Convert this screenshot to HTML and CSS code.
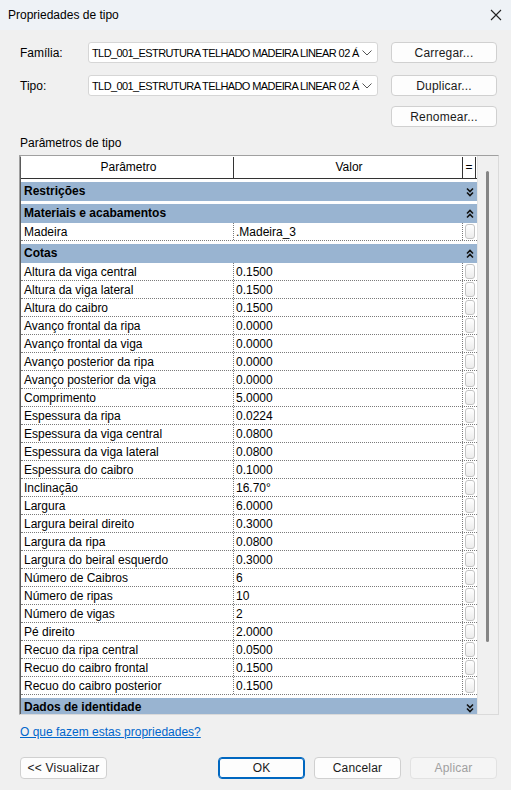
FILE: index.html
```html
<!DOCTYPE html>
<html lang="pt">
<head>
<meta charset="utf-8">
<title>Propriedades de tipo</title>
<link rel="stylesheet" href="styles.css">
</head>
<body>
<div class="window">
  <div class="titlebar">
    <span class="title">Propriedades de tipo</span>
    <svg class="close" width="12" height="12" viewBox="0 0 12 12"><path d="M1 1 L11 11 M11 1 L1 11" stroke="#222" stroke-width="1.1" fill="none"/></svg>
  </div>
  <div class="content">
    <div class="topform">
      <label class="lbl">Família:</label>
      <div class="combo"><span class="combo-text">TLD_001_ESTRUTURA TELHADO MADEIRA LINEAR 02 Á</span><svg class="chev" width="10" height="6" viewBox="0 0 10 6"><path d="M0.5 0.5 L5 5 L9.5 0.5" stroke="#555" stroke-width="1" fill="none"/></svg></div>
      <button class="btn">Carregar...</button>
      <label class="lbl">Tipo:</label>
      <div class="combo"><span class="combo-text">TLD_001_ESTRUTURA TELHADO MADEIRA LINEAR 02 Á</span><svg class="chev" width="10" height="6" viewBox="0 0 10 6"><path d="M0.5 0.5 L5 5 L9.5 0.5" stroke="#555" stroke-width="1" fill="none"/></svg></div>
      <button class="btn">Duplicar...</button>
      <span></span><span></span>
      <button class="btn btn-last">Renomear...</button>
    </div>
    <div class="section-label">Parâmetros de tipo</div>
    <div class="frame">
      <div class="table">
        <div class="hdr">
          <div class="c1 hc">Parâmetro</div>
          <div class="c2 hc">Valor</div>
          <div class="c3 hc heq">=</div>
        </div>
        <div class="grp"><div class="gname">Restrições</div><div class="gicon"><svg width="8" height="10" viewBox="0 0 8 10"><path d="M1 1.5 L4 4.5 L7 1.5 M1 5.5 L4 8.5 L7 5.5" stroke="#111" stroke-width="1.6" fill="none"/></svg></div></div>
        <div class="grp"><div class="gname">Materiais e acabamentos</div><div class="gicon"><svg width="8" height="10" viewBox="0 0 8 10"><path d="M1 4.5 L4 1.5 L7 4.5 M1 8.5 L4 5.5 L7 8.5" stroke="#111" stroke-width="1.6" fill="none"/></svg></div></div>
        <div class="row"><div class="c1">Madeira</div><div class="c2">.Madeira_3</div><div class="c3"><span class="eqbox"></span></div></div>
        <div class="grp"><div class="gname">Cotas</div><div class="gicon"><svg width="8" height="10" viewBox="0 0 8 10"><path d="M1 4.5 L4 1.5 L7 4.5 M1 8.5 L4 5.5 L7 8.5" stroke="#111" stroke-width="1.6" fill="none"/></svg></div></div>
        <div class="row"><div class="c1">Altura da viga central</div><div class="c2">0.1500</div><div class="c3"><span class="eqbox"></span></div></div>
        <div class="row"><div class="c1">Altura da viga lateral</div><div class="c2">0.1500</div><div class="c3"><span class="eqbox"></span></div></div>
        <div class="row"><div class="c1">Altura do caibro</div><div class="c2">0.1500</div><div class="c3"><span class="eqbox"></span></div></div>
        <div class="row"><div class="c1">Avanço frontal da ripa</div><div class="c2">0.0000</div><div class="c3"><span class="eqbox"></span></div></div>
        <div class="row"><div class="c1">Avanço frontal da viga</div><div class="c2">0.0000</div><div class="c3"><span class="eqbox"></span></div></div>
        <div class="row"><div class="c1">Avanço posterior da ripa</div><div class="c2">0.0000</div><div class="c3"><span class="eqbox"></span></div></div>
        <div class="row"><div class="c1">Avanço posterior da viga</div><div class="c2">0.0000</div><div class="c3"><span class="eqbox"></span></div></div>
        <div class="row"><div class="c1">Comprimento</div><div class="c2">5.0000</div><div class="c3"><span class="eqbox"></span></div></div>
        <div class="row"><div class="c1">Espessura da ripa</div><div class="c2">0.0224</div><div class="c3"><span class="eqbox"></span></div></div>
        <div class="row"><div class="c1">Espessura da viga central</div><div class="c2">0.0800</div><div class="c3"><span class="eqbox"></span></div></div>
        <div class="row"><div class="c1">Espessura da viga lateral</div><div class="c2">0.0800</div><div class="c3"><span class="eqbox"></span></div></div>
        <div class="row"><div class="c1">Espessura do caibro</div><div class="c2">0.1000</div><div class="c3"><span class="eqbox"></span></div></div>
        <div class="row"><div class="c1">Inclinação</div><div class="c2">16.70°</div><div class="c3"><span class="eqbox"></span></div></div>
        <div class="row"><div class="c1">Largura</div><div class="c2">6.0000</div><div class="c3"><span class="eqbox"></span></div></div>
        <div class="row"><div class="c1">Largura beiral direito</div><div class="c2">0.3000</div><div class="c3"><span class="eqbox"></span></div></div>
        <div class="row"><div class="c1">Largura da ripa</div><div class="c2">0.0800</div><div class="c3"><span class="eqbox"></span></div></div>
        <div class="row"><div class="c1">Largura do beiral esquerdo</div><div class="c2">0.3000</div><div class="c3"><span class="eqbox"></span></div></div>
        <div class="row"><div class="c1">Número de Caibros</div><div class="c2">6</div><div class="c3"><span class="eqbox"></span></div></div>
        <div class="row"><div class="c1">Número de ripas</div><div class="c2">10</div><div class="c3"><span class="eqbox"></span></div></div>
        <div class="row"><div class="c1">Número de vigas</div><div class="c2">2</div><div class="c3"><span class="eqbox"></span></div></div>
        <div class="row"><div class="c1">Pé direito</div><div class="c2">2.0000</div><div class="c3"><span class="eqbox"></span></div></div>
        <div class="row"><div class="c1">Recuo da ripa central</div><div class="c2">0.0500</div><div class="c3"><span class="eqbox"></span></div></div>
        <div class="row"><div class="c1">Recuo do caibro frontal</div><div class="c2">0.1500</div><div class="c3"><span class="eqbox"></span></div></div>
        <div class="row"><div class="c1">Recuo do caibro posterior</div><div class="c2">0.1500</div><div class="c3"><span class="eqbox"></span></div></div>
        <div class="grp"><div class="gname">Dados de identidade</div><div class="gicon"><svg width="8" height="10" viewBox="0 0 8 10"><path d="M1 1.5 L4 4.5 L7 1.5 M1 5.5 L4 8.5 L7 5.5" stroke="#111" stroke-width="1.6" fill="none"/></svg></div></div>
      </div>
      <div class="scroll"><div class="thumb"></div></div>
    </div>
    <a class="help" href="#">O que fazem estas propriedades?</a>
    <div class="bottom">
      <button class="btn bbtn">&lt;&lt; Visualizar</button>
      <div class="right-btns">
        <button class="btn bbtn ok">OK</button>
        <button class="btn bbtn">Cancelar</button>
        <button class="btn bbtn disabled">Aplicar</button>
      </div>
    </div>
  </div>
</div>
</body>
</html>
```
FILE: styles.css
```css
* { box-sizing: border-box; }
html, body { margin: 0; padding: 0; }
body {
  width: 511px;
  height: 790px;
  background: #f0f0f0;
  font-family: "Liberation Sans", Arial, sans-serif;
  font-size: 12px;
  color: #000;
  overflow: hidden;
}
.window { width: 511px; height: 790px; display: flex; flex-direction: column; }
.titlebar {
  height: 30px;
  flex: none;
  background: #eef2f6;
  display: flex;
  align-items: center;
  justify-content: space-between;
  padding: 0 9px 0 8px;
}
.title { font-size: 12px; color: #000; }
.close { display: block; }
.content { padding: 12px 14px 0 20px; display: flex; flex-direction: column; }

.topform {
  display: grid;
  grid-template-columns: 55px 290px 106px;
  grid-template-rows: 21px 21px 21px;
  column-gap: 13px;
  row-gap: 12px;
  align-items: center;
}
.lbl { font-size: 12px; }
.combo {
  height: 21px;
  background: #fff;
  border: 1px solid #d6d6d6;
  border-radius: 3px;
  display: flex;
  align-items: center;
  padding: 0 6px 0 3px;
  gap: 3px;
}
.combo-text {
  flex: 1;
  white-space: nowrap;
  font-size: 11px;
  letter-spacing: -0.6px;
  height: 14px;
  line-height: 14px;
}
.chev { flex: none; }
.btn {
  height: 21px;
  background: #fdfdfd;
  border: 1px solid #d0d0d0;
  border-radius: 4px;
  font-family: "Liberation Sans", Arial, sans-serif;
  font-size: 12px;
  color: #1a1a1a;
  padding: 0;
  letter-spacing: 0.2px;
}
.btn-last { margin-top: -4px; }

.section-label { margin-top: 7px; height: 15px; line-height: 15px; }

.frame {
  margin-top: 4px;
  width: 480px;
  margin-left: -1px;
  height: 560px;
  display: flex;
  border-top: 1px solid #a0a0a0;
  border-left: 1px solid #a0a0a0;
  border-right: 1px solid #dadada;
  border-bottom: 1px solid #dadada;
  background: #f0f0f0;
}
.table {
  width: 457px;
  background: #fff;
  border-left: 1px solid #5a5a5a;
  border-top: 1px solid #fff;
  overflow: hidden;
}
.hdr {
  display: flex;
  height: 22px;
  border-bottom: 1px solid #333;
  background: #fff;
}
.hc { text-align: center; line-height: 21px; }
.hdr .c1 { border-right: 1px solid #333; }
.hdr .heq { border-left: 1px solid #333; border-right: 1px solid #333; }
.c1 { width: 213px; flex: none; padding-left: 3px; white-space: nowrap; overflow: hidden; }
.c2 { width: 228px; flex: none; padding-left: 2px; white-space: nowrap; }
.c3 { width: 14px; flex: none; display: flex; align-items: center; justify-content: center; }
.row {
  display: flex;
  height: 18px;
  line-height: 18px;
  border-bottom: 1px dotted #7a7a7a;
}
.row .c1 { border-right: 1px dotted #7a7a7a; }
.row .c3 { border-left: 1px dotted #7a7a7a; }
.eqbox {
  width: 10px;
  height: 15px;
  border: 1px solid #c4c4c4;
  border-radius: 3px;
  background: linear-gradient(#ffffff, #ececec);
}
.grp {
  display: flex;
  height: 22px;
  border-top: 3px solid #fff;
  background: #99b4d1;
  font-weight: bold;
  line-height: 19px;
}
.gname { flex: 1; padding-left: 3px; }
.gicon { width: 14px; display: flex; align-items: center; justify-content: center; }
.gicon svg { display: block; }

.scroll {
  flex: 1;
  background: #f0f0f0;
  position: relative;
  border-left: 1px solid #e4e4e4;
}
.thumb {
  position: absolute;
  left: 8px;
  top: 15px;
  width: 3px;
  height: 471px;
  background: #858585;
  border-radius: 2px;
}

.help {
  margin-top: 10px;
  color: #0066cc;
  text-decoration: underline;
  font-size: 12px;
  line-height: 15px;
  width: max-content;
}
.bottom {
  margin-top: 17px;
  display: flex;
  justify-content: space-between;
  width: 477px;
}
.right-btns { display: flex; gap: 9px; }
.bbtn { width: 87px; height: 22px; }
.ok { border: 1px solid #0067c0; box-shadow: inset 0 0 0 1px #0067c0; border-radius: 4px; }
.disabled { color: #a0a0a0; background: #f5f5f5; border-color: #e2e2e2; }
```
